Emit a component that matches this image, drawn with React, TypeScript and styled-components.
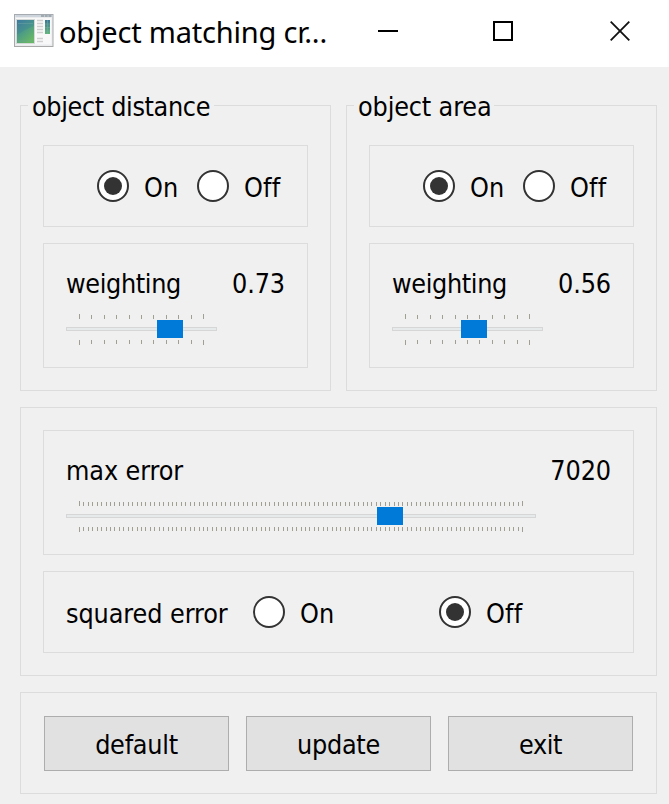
import React from 'react';
import styled, { createGlobalStyle } from 'styled-components';

const GlobalStyle = createGlobalStyle`
  *, *::before, *::after { box-sizing: border-box; }
  body { margin: 0; background: #f0f0f0; overflow: hidden; }
`;

const Window = styled.div`
  width: 669px;
  height: 804px;
  display: flex;
  flex-direction: column;
  background: #f0f0f0;
  color: #000;
  font: 26.7px/32px 'DejaVu Sans Condensed', 'DejaVu Sans', sans-serif;
  font-stretch: condensed;
  white-space: nowrap;
`;

const TitleBar = styled.header`
  flex: none;
  height: 67px;
  display: flex;
  align-items: flex-start;
  background: #fff;
`;

const AppIcon = styled.svg`
  flex: none;
  width: 40px;
  height: 34px;
  margin: 14px 0 0 14px;
`;

const Title = styled.h1`
  flex: none;
  margin: 12px 0 0 5px;
  width: 283px;
  font: 400 29px/40px 'Noto Sans', sans-serif;
  letter-spacing: -0.2px;
`;

const WindowButton = styled.button<{ $width: number }>`
  flex: none;
  width: ${p => p.$width}px;
  height: 62px;
  padding: 0;
  border: 0;
  background: none;
  display: flex;
  justify-content: center;
  align-items: center;
`;

const Content = styled.main`
  display: flex;
  flex-direction: column;
  gap: 16px;
  padding: 38px 12px 0 20px;
`;

const Columns = styled.div`
  display: grid;
  grid-template-columns: 311px 311px;
  gap: 15px;
`;

const Group = styled.section<{ $height: number; $titled?: boolean }>`
  height: ${p => p.$height}px;
  padding: ${p => (p.$titled ? 0 : 22)}px 22px 0;
  border: 1px solid #dcdcdc;
  display: flex;
  flex-direction: column;
`;

const Legend = styled.h2<{ $width: number; $spacing?: number }>`
  flex: none;
  width: ${p => p.$width}px;
  height: 32px;
  margin: -15px 0 22px -15px;
  padding-left: 4px;
  background: #f0f0f0;
  font: inherit;
  letter-spacing: ${p => p.$spacing ?? 0}px;
`;

const Panel = styled.div`
  width: 100%;
  border: 1px solid #dcdcdc;
  & + & { margin-top: 16px; }
`;

const RadioPanel = styled(Panel)<{ $start: number }>`
  height: 82px;
  display: flex;
  align-items: flex-start;
  padding: 24px 0 0 ${p => p.$start}px;
`;

const SliderPanel = styled(Panel)`
  height: 125px;
  padding: 24px 22px 0;
`;

const Option = styled.label<{ $width: number }>`
  width: ${p => p.$width}px;
  display: flex;
  gap: 15px;
`;

const RadioMark = styled.svg`
  flex: none;
  width: 32px;
  height: 32px;
`;

const OptionText = styled.span`
  margin-top: 2px;
  letter-spacing: 0.2px;
`;

const RowLabel = styled.span`
  width: 187px;
  margin-top: 2px;
  letter-spacing: -0.08px;
`;

const ValueRow = styled.div`
  display: flex;
  justify-content: space-between;
`;

const Name = styled.span<{ $spacing?: number }>`
  letter-spacing: ${p => p.$spacing ?? 0}px;
`;

const Value = styled.output`
  letter-spacing: -0.1px;
`;

const SliderDrawing = styled.svg`
  display: block;
  margin-top: 13px;
`;

const ButtonBar = styled.section`
  height: 102px;
  padding: 23px;
  border: 1px solid #dcdcdc;
  display: flex;
  gap: 17px;
`;

const PushButton = styled.button<{ $spacing?: number }>`
  width: 185px;
  height: 55px;
  padding: 3px 0 0;
  border: 1px solid #adadad;
  background: #e1e1e1;
  color: #000;
  font: inherit;
  letter-spacing: ${p => p.$spacing ?? 0}px;
`;

function Radio({ text, checked, width }: { text: string; checked?: boolean; width: number }) {
  return (
    <Option $width={width}>
      <RadioMark viewBox="0 0 32 32">
        <circle cx="16" cy="16" r="15" fill="#fff" stroke="#333" strokeWidth="2" />
        {checked && <circle cx="16" cy="16" r="9" fill="#333" />}
      </RadioMark>
      <OptionText>{text}</OptionText>
    </Option>
  );
}

function Slider({ width, steps, handle }: { width: number; steps: number; handle: number }) {
  const span = width - 27;
  const ticks = Array.from({ length: steps + 1 }, (_, i) => ({
    x: 13 + Math.round((i * span) / steps),
    end: i === 0 || i === steps,
  }));
  return (
    <SliderDrawing width={width} height="33" shapeRendering="crispEdges">
      {ticks.map(({ x, end }) => (
        <React.Fragment key={x}>
          <rect x={x} y={end ? 1 : 2} width="1" height={end ? 5 : 4} fill="#a09f91" />
          <rect x={x} y="27" width="1" height={end ? 5 : 4} fill="#a09f91" />
        </React.Fragment>
      ))}
      <rect x="0" y="14" width={width} height="4" fill="#d6d6d6" />
      <rect x="1" y="15" width={width - 2} height="2" fill="#e7eaea" />
      <rect x={handle} y="7" width="26" height="18" fill="#007ad9" />
    </SliderDrawing>
  );
}

function MatchGroup({ title, titleWidth, spacing, value, handle }: {
  title: string; titleWidth: number; spacing?: number; value: string; handle: number;
}) {
  return (
    <Group $height={286} $titled>
      <Legend $width={titleWidth} $spacing={spacing}>{title}</Legend>
      <RadioPanel $start={53}>
        <Radio text="On" checked width={100} />
        <Radio text="Off" width={90} />
      </RadioPanel>
      <SliderPanel>
        <ValueRow><Name $spacing={-0.35}>weighting</Name><Value>{value}</Value></ValueRow>
        <Slider width={151} steps={10} handle={handle} />
      </SliderPanel>
    </Group>
  );
}

function ProgramIcon() {
  return (
    <AppIcon viewBox="0 0 40 34">
      <defs>
        <linearGradient id="pane" x1="0" y1="0" x2="0.65" y2="1">
          <stop offset="0" stopColor="#417ba0" />
          <stop offset="0.5" stopColor="#4b9a87" />
          <stop offset="1" stopColor="#68b766" />
        </linearGradient>
        <linearGradient id="strip" x1="0" y1="0" x2="0" y2="1">
          <stop offset="0" stopColor="#3c7795" />
          <stop offset="1" stopColor="#62b777" />
        </linearGradient>
        <linearGradient id="frame" x1="0" y1="0" x2="0" y2="1">
          <stop offset="0" stopColor="#a5abb0" />
          <stop offset="1" stopColor="#a8a8a8" />
        </linearGradient>
      </defs>
      <rect x="0.5" y="0.5" width="38.5" height="32" fill="#e9ebed" stroke="url(#frame)" />
      <path d="M1.5 2H38" stroke="#c3ccd5" strokeWidth="1.5" />
      <path d="M27 2H38" stroke="#929ca5" strokeWidth="1.5" strokeDasharray="3 .7" />
      <rect x="2" y="4" width="35.5" height="26.5" fill="#f8f8f8" />
      <rect x="2" y="5" width="19" height="25" fill="#d4d9d8" />
      <rect x="3" y="6" width="17" height="23" fill="url(#pane)" />
      <path d="M3 20C9 18 13 14 20 12V6H3Z" fill="#3976a1" opacity="0.25" />
      <path d="M4 9.5H19M4 27H19" stroke="#78aaa9" strokeWidth="0.6" opacity="0.7" />
      <path d="M23 6.5H29M23 9.5H29M23 12.5H29M23 15.5H29M23 18.5H29M23 24.5H29M23 27.5H29" stroke="#cfcfcf" strokeWidth="1.4" />
      <rect x="31" y="6" width="5" height="14" fill="url(#strip)" />
      <path d="M31 10H36M31 13.5H36M31 17H36M33.5 6V20" stroke="#78afa7" strokeWidth="0.7" opacity="0.7" />
    </AppIcon>
  );
}

export default function App() {
  return (
    <Window>
      <GlobalStyle />
      <TitleBar>
        <ProgramIcon />
        <Title>object matching cr...</Title>
        <WindowButton $width={92} aria-label="Minimize">
          <svg width="20" height="20" viewBox="0 0 20 20">
            <path d="M0 10H20" stroke="#000" strokeWidth="2" />
          </svg>
        </WindowButton>
        <WindowButton $width={138} aria-label="Maximize">
          <svg width="20" height="20" viewBox="0 0 20 20">
            <rect x="1" y="1" width="18" height="18" fill="none" stroke="#000" strokeWidth="2" />
          </svg>
        </WindowButton>
        <WindowButton $width={96} aria-label="Close">
          <svg width="20" height="20" viewBox="0 0 20 20">
            <path d="M.7 .7L19.3 19.3M19.3 .7L.7 19.3" stroke="#111" strokeWidth="1.8" />
          </svg>
        </WindowButton>
      </TitleBar>
      <Content>
        <Columns>
          <MatchGroup title="object distance" titleWidth={186} spacing={-0.35} value="0.73" handle={91} />
          <MatchGroup title="object area" titleWidth={140} spacing={-0.15} value="0.56" handle={69} />
        </Columns>
        <Group $height={269}>
          <SliderPanel>
            <ValueRow><Name $spacing={-0.1}>max error</Name><Value>7020</Value></ValueRow>
            <Slider width={470} steps={100} handle={311} />
          </SliderPanel>
          <RadioPanel $start={22}>
            <RowLabel>squared error</RowLabel>
            <Radio text="On" width={186} />
            <Radio text="Off" checked width={90} />
          </RadioPanel>
        </Group>
        <ButtonBar>
          <PushButton $spacing={-0.25}>default</PushButton>
          <PushButton $spacing={-0.3}>update</PushButton>
          <PushButton $spacing={-0.4}>exit</PushButton>
        </ButtonBar>
      </Content>
    </Window>
  );
}
